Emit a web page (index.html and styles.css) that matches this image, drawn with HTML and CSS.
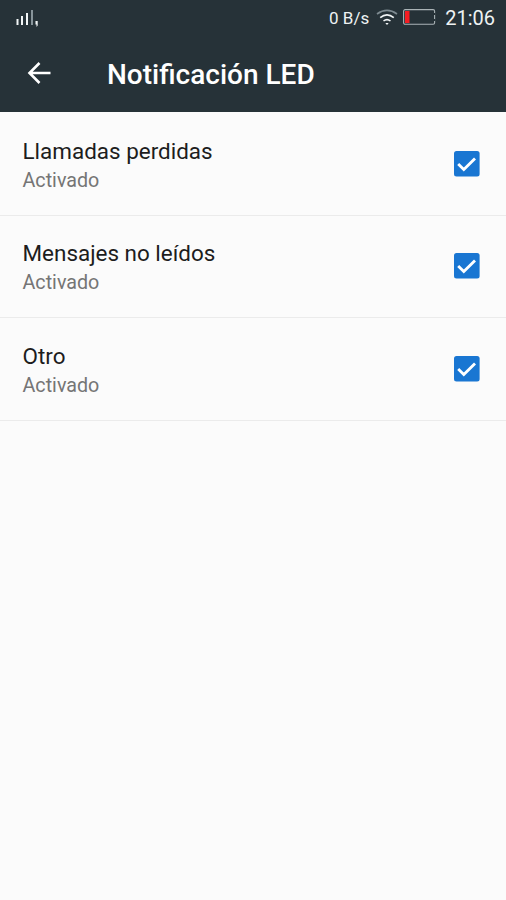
FILE: index.html
```html
<!DOCTYPE html>
<html lang="es">
<head>
<meta charset="utf-8">
<title>Notificación LED</title>
<link rel="stylesheet" href="styles.css">
</head>
<body>
<header class="header">
  <div class="status">
    <svg class="signal" width="24" height="20" viewBox="0 0 24 20">
      <path fill="#f1f5f6" d="M.5 11h2v6h-2zM5 8h2v9H5zM10 5h2v12h-2z"/>
      <path fill="#87949a" d="M15 2h2v15h-2z"/>
      <path fill="#f1f5f6" d="M19.500 13h2.200v4.500l-1.200 1.500v-2.500h-1z"/>
    </svg>
    <span class="rate">0 B/s</span>
    <svg class="wifi" width="22" height="18" viewBox="0 0 22 18" fill="none" stroke-width="1.600">
      <path stroke="#7e8b91" d="M1 5Q11-2.200 21 5"/>
      <path stroke="#f1f5f6" d="M4.200 8.600Q11 3.200 17.800 8.600M7.500 12Q11 9.200 14.500 12"/>
      <path fill="#f1f5f6" d="M9.300 13.900h3.400L11 16z"/>
    </svg>
    <svg class="battery" width="33" height="16" viewBox="0 0 33 16">
      <rect x=".6" y=".6" width="31" height="14.600" rx="1.500" fill="none" stroke="#aab3b6" stroke-width="1.100"/>
      <path stroke="#263238" stroke-width="1.500" d="M31.600 4v2M31.600 10v2"/>
      <path fill="#f51d23" d="M2 2h4.500v12H2z"/>
    </svg>
    <time class="clock">21:06</time>
  </div>
  <div class="toolbar">
    <svg class="back" width="24" height="24" viewBox="0 0 24 24" fill="none" stroke="#fff" stroke-width="2.600">
      <path d="M12.500 2L2.500 12l10 10M3 12H23.500"/>
    </svg>
    <h1 class="title">Notificación LED</h1>
  </div>
</header>
<main class="list">
  <section class="row">
    <div class="label"><div class="name">Llamadas perdidas</div><div class="state">Activado</div></div>
    <svg class="check" width="26" height="26" viewBox="0 0 26 26"><rect width="25.600" height="25.600" rx="2.500" fill="#1976d2"/><path fill="none" stroke="#fff" stroke-width="2.800" d="M4.200 13l5.600 5.500L21 7.400"/></svg>
  </section>
  <section class="row">
    <div class="label"><div class="name">Mensajes no leídos</div><div class="state">Activado</div></div>
    <svg class="check" width="26" height="26" viewBox="0 0 26 26"><rect width="25.600" height="25.600" rx="2.500" fill="#1976d2"/><path fill="none" stroke="#fff" stroke-width="2.800" d="M4.200 13l5.600 5.500L21 7.400"/></svg>
  </section>
  <section class="row">
    <div class="label"><div class="name">Otro</div><div class="state">Activado</div></div>
    <svg class="check" width="26" height="26" viewBox="0 0 26 26"><rect width="25.600" height="25.600" rx="2.500" fill="#1976d2"/><path fill="none" stroke="#fff" stroke-width="2.800" d="M4.200 13l5.600 5.500L21 7.400"/></svg>
  </section>
</main>
</body>
</html>
```
FILE: styles.css
```css
* {
  box-sizing: border-box;
}

body {
  margin: 0;
  min-height: 900px;
  background: #fbfbfb;
  font-family: Roboto, sans-serif;
}

.header {
  height: 112px;
  background: #263238;
  color: #fff;
}

.status {
  display: flex;
  align-items: center;
  height: 34px;
  padding: 0 11px 0 16px;
  color: #eef2f3;
}

.signal {
  margin: 2px auto 0 0;
}

.rate {
  font-size: 17px;
  line-height: 34px;
  margin-top: 1px;
}

.wifi {
  margin: 2px 5px 0 7px;
}

.clock {
  margin: 1px 0 0 9px;
  font-size: 20px;
}

.toolbar {
  display: flex;
  align-items: center;
  height: 78px;
  padding-left: 27px;
}

.title {
  margin: 4px 0 0 56px;
  font-size: 28px;
  font-weight: 500;
  line-height: 34px;
}

.list {
  padding-top: 0.900px;
}

.row {
  display: flex;
  align-items: center;
  justify-content: space-between;
  height: 102.700px;
  padding: 0 26px 0 22.500px;
  border-bottom: 1px solid #ebebeb;
}

.label {
  padding-top: 4px;
}

.name {
  color: #1d1d1d;
  font-size: 22.450px;
  line-height: 30px;
}

.state {
  color: #757575;
  font-size: 19.700px;
  line-height: 30px;
}
```
